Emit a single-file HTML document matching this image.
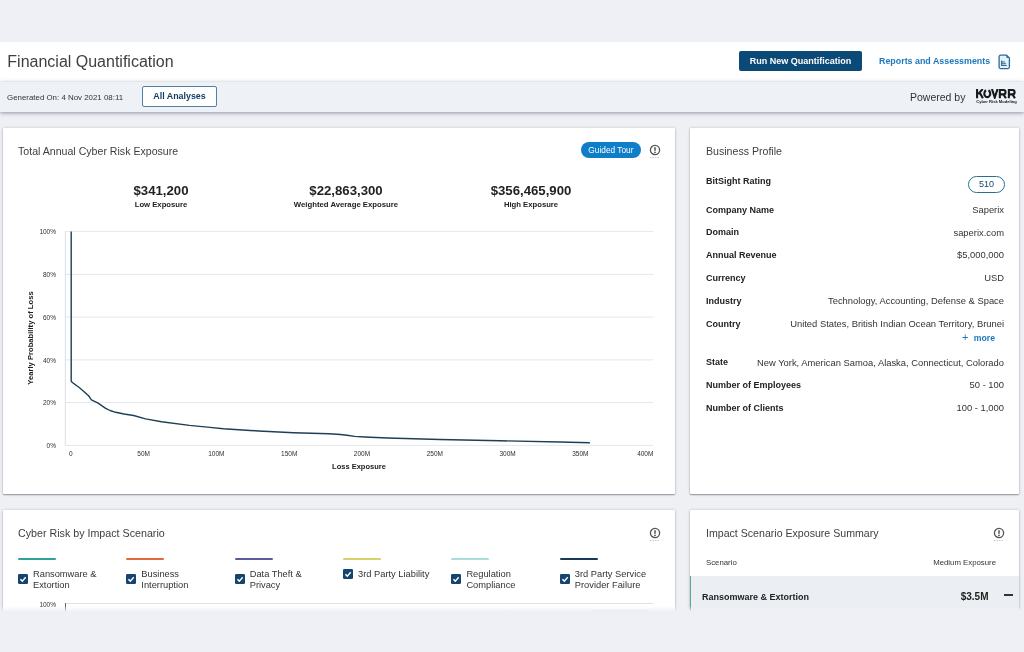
<!DOCTYPE html>
<html><head><meta charset="utf-8">
<style>
*{box-sizing:border-box;margin:0;padding:0}
html,body{width:1024px;height:652px;overflow:hidden;background:#eef0f4;font-family:"Liberation Sans",sans-serif;color:#333}
.abs{position:absolute;white-space:nowrap}
#hdr{left:0;top:42px;width:1024px;height:40px;background:#fff}
#sub{left:0;top:82px;width:1024px;height:30px;background:#eef1f5;box-shadow:0 1px 4px rgba(60,70,90,.55)}
.card{background:#fff;box-shadow:0 1px 1.5px rgba(40,45,55,.42),0 0 3px rgba(40,45,55,.22);border-radius:1px}
.t{line-height:1;transform-origin:0 50%}
.b{font-weight:bold}
.r{text-align:right}
.lbl{font-size:9px;font-weight:bold;color:#222;left:706px}
.val{font-size:9.4px;color:#333;right:20px}
.lg{font-size:9.3px;color:#333}
.tick{font-size:6.5px;color:#2e2e2e}
#wrap{position:absolute;left:0;top:0;width:1024px;height:652px;will-change:transform}
</style></head><body><div id="wrap">
<div class="abs" style="left:0;top:0;width:1024px;height:42px;background:#eff0f6"></div>
<div class="abs" id="hdr"></div>
<div class="abs" id="sub"></div>
<div class="abs t" id="title" style="left:7.3px;top:54.3px;font-size:16px;color:#404040">Financial Quantification</div>
<div class="abs" id="runbtn" style="left:739px;top:51px;width:123px;height:20px;background:#0b4977;border-radius:2px;color:#fff;font-size:9px;font-weight:bold;text-align:center;line-height:20px">Run New Quantification</div>
<div class="abs t b" id="reports" style="left:879px;top:57px;font-size:8.9px;color:#1c78bd">Reports and Assessments</div>
<svg class="abs" id="docicon" style="left:997.5px;top:54px" width="13" height="16" viewBox="0 0 13 16"><path d="M2.6 1.2h5.9l2.9 2.9v9a1.5 1.5 0 0 1-1.5 1.5H2.6a1.5 1.5 0 0 1-1.5-1.5V2.7a1.5 1.5 0 0 1 1.5-1.5z" fill="#e4f1fa" stroke="#2c6c96" stroke-width="1.3"/><path d="M8.5 1.2v2.9h2.9z" fill="#2c6c96"/><path d="M3.6 6.6v4.9h5.2M3.6 8h3.4M3.6 9.7h4.6" fill="none" stroke="#2c6c96" stroke-width="1.1"/></svg>
<div class="abs t" id="gen" style="left:7px;top:93.5px;font-size:7.9px;color:#333">Generated On: 4 Nov 2021 08:11</div>
<div class="abs" id="allbtn" style="left:142px;top:86px;width:75px;height:21px;background:#fff;border:1px solid #4d82a2;border-radius:2px;color:#123e66;font-size:8.9px;font-weight:bold;text-align:center;line-height:19px">All Analyses</div>
<div class="abs t" id="powered" style="left:910px;top:92px;font-size:10.5px;color:#333">Powered by</div>
<svg class="abs" id="kovrr" style="left:976.3px;top:89.4px" width="40" height="9.2" viewBox="0 0 40 9.2"><g fill="none" stroke="#16181b" stroke-width="2.1" stroke-linejoin="miter"><path d="M1.05 0V9.2M6.6 0L2.2 5.2M3.6 3.6L6.9 9.2"/><path d="M12.45 1.3A2.95 3.55 0 1 1 10.05 1.3"/><path d="M15.9 0L18.75 8.4L21.6 0"/><path d="M23.85 9.2V1.05H27.4a2.15 2.15 0 0 1 0 4.3H23.85M27.5 5.4L29.9 9.2"/><path d="M32.9 9.2V1.05H36.45a2.15 2.15 0 0 1 0 4.3H32.9M36.55 5.4L38.95 9.2"/></g></svg>
<div class="abs t b" id="kovrrsub" style="left:976.3px;top:100.4px;font-size:4.1px;color:#16181b">Cyber Risk Modeling</div>

<!-- card 1 -->
<div class="abs card" id="c1" style="left:3px;top:128px;width:672px;height:366px"></div>
<div class="abs t" id="c1t" style="left:18px;top:146px;font-size:10.6px;color:#3e3e3e">Total Annual Cyber Risk Exposure</div>
<div class="abs" id="guided" style="left:580.6px;top:142px;width:60.6px;height:15.6px;background:#0f7ec8;border-radius:8px;color:#fff;font-size:8.3px;text-align:center;line-height:17.6px">Guided Tour</div>
<svg class="abs info" style="left:648px;top:143px" width="14" height="16" viewBox="0 0 14 16"><circle cx="7" cy="7" r="4.6" fill="none" stroke="#555" stroke-width="1.3"/><path d="M7 4.3v3.5" stroke="#444" stroke-width="1.4"/><circle cx="7" cy="9.4" r=".8" fill="#444"/><path d="M2 14.5h10" stroke="#bbb" stroke-width=".8" stroke-dasharray="1.5 1"/></svg>

<div class="abs b" id="v1" style="left:61px;width:200px;text-align:center;top:184.2px;font-size:13.2px;line-height:13px;color:#222">$341,200</div>
<div class="abs b" id="l1" style="left:61px;width:200px;text-align:center;top:201px;font-size:7.7px;line-height:8px;color:#222">Low Exposure</div>
<div class="abs b" id="v2" style="left:246px;width:200px;text-align:center;top:184.2px;font-size:13.2px;line-height:13px;color:#222">$22,863,300</div>
<div class="abs b" id="l2" style="left:246px;width:200px;text-align:center;top:201px;font-size:7.75px;line-height:8px;color:#222">Weighted Average Exposure</div>
<div class="abs b" id="v3" style="left:431px;width:200px;text-align:center;top:184.2px;font-size:13.2px;line-height:13px;color:#222">$356,465,900</div>
<div class="abs b" id="l3" style="left:431px;width:200px;text-align:center;top:201px;font-size:7.7px;line-height:8px;color:#222">High Exposure</div>

<svg class="abs" id="chart" style="left:0;top:128px" width="676" height="366" viewBox="0 128 676 366">
 <g stroke="#e6e7ea" stroke-width="1" fill="none">
  <path d="M65 231.6H653.4M65 274.4H653.4M65 317.1H653.4M65 359.9H653.4M65 402.6H653.4M65 445.4H653.4"/>
  <path d="M65.3 231.6V445.4" stroke="#dcdfe4"/>
 </g>
 <path id="curve" d="M71.2 231.6 L71.2 381 L72 382.2 L79.8 388 L85 392.5 L88.8 396 L91.4 399.9 L97.7 402.9 L105.7 408.3 L110 410.5 L115.7 412.3 L124 414 L133.6 415.5 L145.6 418.9 L161.5 421.8 L189.5 425.4 L210 427.4 L223.4 428.7 L258.6 431 L293.7 432.7 L328.9 433.8 L340.6 434.5 L347 435.3 L354.7 436.4 L365 437 L387.5 438 L440 439.5 L500 440.8 L560 442 L589.9 442.7" fill="none" stroke="#1f3f55" stroke-width="1.4" stroke-linejoin="round"/>
</svg>
<div id="yticks"></div>
<div class="abs tick r" style="left:20px;width:36px;top:228px">100%</div>
<div class="abs tick r" style="left:20px;width:36px;top:271px">80%</div>
<div class="abs tick r" style="left:20px;width:36px;top:314px">60%</div>
<div class="abs tick r" style="left:20px;width:36px;top:356.8px">40%</div>
<div class="abs tick r" style="left:20px;width:36px;top:399px">20%</div>
<div class="abs tick r" style="left:20px;width:36px;top:442px">0%</div>
<div class="abs tick" style="left:50.8px;width:40px;text-align:center;top:450.2px">0</div>
<div class="abs tick" style="left:123.6px;width:40px;text-align:center;top:450.2px">50M</div>
<div class="abs tick" style="left:196.4px;width:40px;text-align:center;top:450.2px">100M</div>
<div class="abs tick" style="left:269.2px;width:40px;text-align:center;top:450.2px">150M</div>
<div class="abs tick" style="left:342px;width:40px;text-align:center;top:450.2px">200M</div>
<div class="abs tick" style="left:414.8px;width:40px;text-align:center;top:450.2px">250M</div>
<div class="abs tick" style="left:487.6px;width:40px;text-align:center;top:450.2px">300M</div>
<div class="abs tick" style="left:560.4px;width:40px;text-align:center;top:450.2px">350M</div>
<div class="abs tick r" style="left:613.4px;width:40px;top:450.2px">400M</div>
<div class="abs b" id="xtitle" style="left:259px;width:200px;text-align:center;top:462.6px;font-size:7.5px;line-height:8px;color:#222">Loss Exposure</div>
<div class="abs b" id="ytitle" style="left:-69px;top:334px;width:200px;text-align:center;font-size:7.65px;line-height:8px;color:#222;transform:rotate(-90deg)">Yearly Probability of Loss</div>

<!-- card 2 -->
<div class="abs card" id="c2" style="left:690px;top:128px;width:329px;height:366px"></div>
<div class="abs t" id="c2t" style="left:706px;top:146px;font-size:10.6px;color:#3e3e3e">Business Profile</div>
<div class="abs" id="pill" style="left:968px;top:176px;width:37px;height:17px;border:1px solid #2c6e8c;border-radius:9px;font-size:9px;line-height:15px;text-align:center;color:#17456f">510</div>
<div class="abs t lbl" style="top:177.4px">BitSight Rating</div>
<div class="abs t lbl" style="top:205.9px">Company Name</div><div class="abs t val" style="top:205.0px">Saperix</div>
<div class="abs t lbl" style="top:228.4px">Domain</div><div class="abs t val" style="top:227.5px">saperix.com</div>
<div class="abs t lbl" style="top:250.9px">Annual Revenue</div><div class="abs t val" style="top:250.0px">$5,000,000</div>
<div class="abs t lbl" style="top:273.9px">Currency</div><div class="abs t val" style="top:273.0px">USD</div>
<div class="abs t lbl" style="top:296.9px">Industry</div><div class="abs t val" style="top:296.0px">Technology, Accounting, Defense &amp; Space</div>
<div class="abs t lbl" style="top:319.9px">Country</div><div class="abs t val" style="top:319.0px">United States, British Indian Ocean Territory, Brunei</div>
<div class="abs t" id="plus" style="left:962px;top:332.3px;font-size:11px;color:#1c78bd">+</div><div class="abs t b" id="more" style="left:973.8px;top:333.8px;font-size:8.7px;color:#1c78bd">more</div>
<div class="abs t lbl" style="top:358.4px">State</div><div class="abs t val" style="top:357.5px">New York, American Samoa, Alaska, Connecticut, Colorado</div>
<div class="abs t lbl" style="top:380.9px">Number of Employees</div><div class="abs t val" style="top:380.0px">50 - 100</div>
<div class="abs t lbl" style="top:403.9px">Number of Clients</div><div class="abs t val" style="top:403.0px">100 - 1,000</div>

<!-- card 3 -->
<div class="abs card" id="c3" style="left:3px;top:510px;width:672px;height:120px"></div>
<div class="abs t" id="c3t" style="left:18px;top:527.9px;font-size:10.7px;color:#3e3e3e">Cyber Risk by Impact Scenario</div>
<svg class="abs info" style="left:648px;top:526px" width="14" height="16" viewBox="0 0 14 16"><circle cx="7" cy="7" r="4.6" fill="none" stroke="#555" stroke-width="1.3"/><path d="M7 4.3v3.5" stroke="#444" stroke-width="1.4"/><circle cx="7" cy="9.4" r=".8" fill="#444"/><path d="M2 14.5h10" stroke="#bbb" stroke-width=".8" stroke-dasharray="1.5 1"/></svg>
<div class="abs" style="left:17.8px;top:557.9px;width:38px;height:2.6px;border-radius:1.3px;background:#2fa39a"></div>
<svg class="abs" style="left:17.8px;top:574px" width="10" height="10" viewBox="0 0 10 10"><rect width="10" height="10" rx="1.3" fill="#15446f"/><path d="M2.4 5.2l1.9 1.9L7.7 3.2" fill="none" stroke="#fff" stroke-width="1.4"/></svg>
<div class="abs t lg" style="left:33.0px;top:569.8px">Ransomware &amp;</div>
<div class="abs t lg" style="left:33.0px;top:580.5px">Extortion</div>
<div class="abs" style="left:126.1px;top:557.9px;width:38px;height:2.6px;border-radius:1.3px;background:#e8663c"></div>
<svg class="abs" style="left:126.1px;top:574px" width="10" height="10" viewBox="0 0 10 10"><rect width="10" height="10" rx="1.3" fill="#15446f"/><path d="M2.4 5.2l1.9 1.9L7.7 3.2" fill="none" stroke="#fff" stroke-width="1.4"/></svg>
<div class="abs t lg" style="left:141.3px;top:569.8px">Business</div>
<div class="abs t lg" style="left:141.3px;top:580.5px">Interruption</div>
<div class="abs" style="left:234.5px;top:557.9px;width:38px;height:2.6px;border-radius:1.3px;background:#5d5a9c"></div>
<svg class="abs" style="left:234.5px;top:574px" width="10" height="10" viewBox="0 0 10 10"><rect width="10" height="10" rx="1.3" fill="#15446f"/><path d="M2.4 5.2l1.9 1.9L7.7 3.2" fill="none" stroke="#fff" stroke-width="1.4"/></svg>
<div class="abs t lg" style="left:249.7px;top:569.8px">Data Theft &amp;</div>
<div class="abs t lg" style="left:249.7px;top:580.5px">Privacy</div>
<div class="abs" style="left:342.8px;top:557.9px;width:38px;height:2.6px;border-radius:1.3px;background:#d9d16b"></div>
<svg class="abs" style="left:342.8px;top:568.7px" width="10" height="10" viewBox="0 0 10 10"><rect width="10" height="10" rx="1.3" fill="#15446f"/><path d="M2.4 5.2l1.9 1.9L7.7 3.2" fill="none" stroke="#fff" stroke-width="1.4"/></svg>
<div class="abs t lg" style="left:358.0px;top:569.8px">3rd Party Liability</div>
<div class="abs" style="left:451.2px;top:557.9px;width:38px;height:2.6px;border-radius:1.3px;background:#a9ddd8"></div>
<svg class="abs" style="left:451.2px;top:574px" width="10" height="10" viewBox="0 0 10 10"><rect width="10" height="10" rx="1.3" fill="#15446f"/><path d="M2.4 5.2l1.9 1.9L7.7 3.2" fill="none" stroke="#fff" stroke-width="1.4"/></svg>
<div class="abs t lg" style="left:466.4px;top:569.8px">Regulation</div>
<div class="abs t lg" style="left:466.4px;top:580.5px">Compliance</div>
<div class="abs" style="left:559.5px;top:557.9px;width:38px;height:2.6px;border-radius:1.3px;background:#173a5c"></div>
<svg class="abs" style="left:559.5px;top:574px" width="10" height="10" viewBox="0 0 10 10"><rect width="10" height="10" rx="1.3" fill="#15446f"/><path d="M2.4 5.2l1.9 1.9L7.7 3.2" fill="none" stroke="#fff" stroke-width="1.4"/></svg>
<div class="abs t lg" style="left:574.8px;top:569.8px">3rd Party Service</div>
<div class="abs t lg" style="left:574.8px;top:580.5px">Provider Failure</div>
<div class="abs" style="left:65px;top:602.6px;width:588.4px;height:1px;background:#dfe2e6"></div>

<div class="abs" style="left:65.2px;top:603.3px;width:1.3px;height:8px;background:#666"></div>
<div class="abs" style="left:592.4px;top:609.5px;width:55.6px;height:1px;background:#d4d7db"></div>
<div class="abs tick r" style="left:20px;width:36px;top:600.5px">100%</div>

<!-- card 4 -->
<div class="abs card" id="c4" style="left:690px;top:510px;width:329px;height:120px"></div>
<div class="abs t" id="c4t" style="left:706px;top:527.9px;font-size:10.6px;color:#3e3e3e">Impact Scenario Exposure Summary</div>
<svg class="abs info" style="left:991.5px;top:526px" width="14" height="16" viewBox="0 0 14 16"><circle cx="7" cy="7" r="4.6" fill="none" stroke="#555" stroke-width="1.3"/><path d="M7 4.3v3.5" stroke="#444" stroke-width="1.4"/><circle cx="7" cy="9.4" r=".8" fill="#444"/><path d="M2 14.5h10" stroke="#bbb" stroke-width=".8" stroke-dasharray="1.5 1"/></svg>
<div class="abs t" id="scn" style="left:706px;top:558.6px;font-size:7.8px;color:#333">Scenario</div>
<div class="abs t" id="med" style="right:28px;top:558.6px;font-size:7.8px;color:#333">Medium Exposure</div>
<div class="abs" id="row" style="left:690px;top:576px;width:329px;height:40px;background:#ebeef2;border-left:1.3px solid #5aa89e"></div>
<div class="abs t b" id="rw" style="left:702px;top:592.5px;font-size:9px;color:#222">Ransomware &amp; Extortion</div>
<div class="abs t b" id="amt" style="right:35.5px;top:592px;font-size:10px;color:#222">$3.5M</div>
<div class="abs" id="minus" style="left:1003.5px;top:594px;width:9px;height:1.5px;background:#333"></div>

<div class="abs" style="left:0;top:606px;width:1024px;height:5px;background:linear-gradient(rgba(239,240,246,0),rgba(239,240,246,.85))"></div>
<!-- bottom strip -->
<div class="abs" id="bot" style="left:0;top:611px;width:1024px;height:41px;background:#eff0f6"></div>
</div></body></html>
